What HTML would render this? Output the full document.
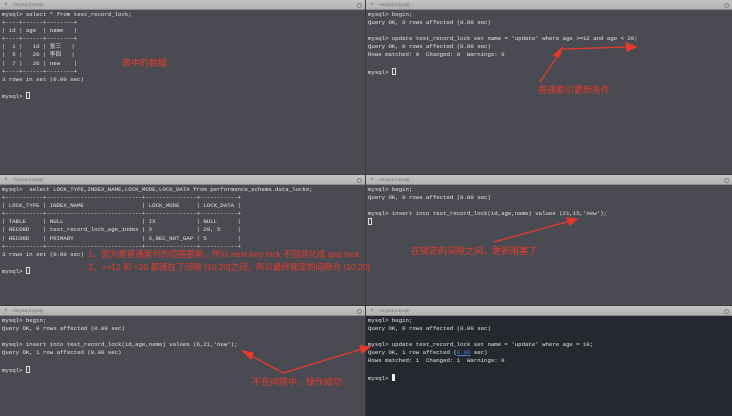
<!DOCTYPE html>
<html><head><meta charset="utf-8"><style>
*{margin:0;padding:0;box-sizing:border-box}
body{width:732px;height:416px;overflow:hidden;background:#3a3b40;position:relative;font-family:"Liberation Mono",monospace}
.p{position:absolute;background:#4a4b52;overflow:hidden}
.t{position:absolute;left:0;right:0;top:0;height:10px;background:linear-gradient(#c4c4c4,#b2b2b2);border-bottom:1px solid #8a8a8a;font-family:"Liberation Sans",sans-serif;font-size:4.5px;color:#707070;line-height:10px}
.t .x{position:absolute;left:4px;font-size:6px}
.t .n{position:absolute;left:12px}
.t .c{position:absolute;right:3px;top:2.5px;width:5px;height:5px;border:1px solid #808080;border-radius:50%}
pre{position:absolute;left:2px;font-family:"Liberation Mono","Noto Sans CJK SC",monospace;font-size:5.7px;line-height:8.1px;color:#e4e4e4;white-space:pre}
.r{position:absolute;color:#e8392a;font-family:"Liberation Sans","Noto Sans CJK SC",sans-serif;font-size:9px;white-space:nowrap;line-height:12px}
.cur{display:inline-block;width:4px;height:7px;border:1px solid #ddd;vertical-align:-1px}
.curf{display:inline-block;width:3px;height:7px;background:#eee;vertical-align:-1px}
</style></head><body>
<div class="p" style="left:0;top:0;width:365px;height:174px">
<div class="t"><span class="x">×</span><span class="n">~/mysql (mysql)</span><span class="c"></span></div>
<pre style="top:11px">mysql> select * from test_record_lock;
+----+------+--------+
| id | age  | name   |
+----+------+--------+
|  1 |   10 | 张三   |
|  5 |   20 | 李四   |
|  7 |   26 | new    |
+----+------+--------+
3 rows in set (0.00 sec)

mysql> <span class="cur"></span></pre>
<div class="r" style="left:122px;top:57px">表中的数据</div>
</div>
<div class="p" style="left:366px;top:0;width:366px;height:174px">
<div class="t"><span class="x">×</span><span class="n">~/mysql (mysql)</span><span class="c"></span></div>
<pre style="top:11px">mysql> begin;
Query OK, 0 rows affected (0.00 sec)

mysql> update test_record_lock set name = 'update' where age >=12 and age &lt; 20;
Query OK, 0 rows affected (0.00 sec)
Rows matched: 0  Changed: 0  Warnings: 0

mysql> <span class="cur"></span></pre>
<div class="r" style="left:172px;top:84px">普通索引更新条件</div>
</div>
<div class="p" style="left:0;top:175px;width:365px;height:130px">
<div class="t"><span class="x">×</span><span class="n">~/mysql (mysql)</span><span class="c"></span></div>
<pre style="top:11px">mysql>  select LOCK_TYPE,INDEX_NAME,LOCK_MODE,LOCK_DATA from performance_schema.data_locks;
+-----------+----------------------------+---------------+-----------+
| LOCK_TYPE | INDEX_NAME                 | LOCK_MODE     | LOCK_DATA |
+-----------+----------------------------+---------------+-----------+
| TABLE     | NULL                       | IX            | NULL      |
| RECORD    | test_record_lock_age_index | X             | 20, 5     |
| RECORD    | PRIMARY                    | X,REC_NOT_GAP | 5         |
+-----------+----------------------------+---------------+-----------+
3 rows in set (0.00 sec)

mysql> <span class="cur"></span></pre>
</div>
<div class="p" style="left:366px;top:175px;width:366px;height:130px">
<div class="t"><span class="x">×</span><span class="n">~/mysql (mysql)</span><span class="c"></span></div>
<pre style="top:11px">mysql> begin;
Query OK, 0 rows affected (0.00 sec)

mysql> insert into test_record_lock(id,age,name) values (21,15,'new');
<span class="cur"></span></pre>
</div>
<div class="p" style="left:0;top:306px;width:365px;height:110px">
<div class="t"><span class="x">×</span><span class="n">~/mysql (mysql)</span><span class="c"></span></div>
<pre style="top:11px">mysql> begin;
Query OK, 0 rows affected (0.00 sec)

mysql> insert into test_record_lock(id,age,name) values (6,21,'new');
Query OK, 1 row affected (0.00 sec)

mysql> <span class="cur"></span></pre>
</div>
<div class="p" style="left:366px;top:306px;width:366px;height:110px;background:#262830">
<div class="t"><span class="x">×</span><span class="n">~/mysql (mysql)</span><span class="c"></span></div>
<pre style="top:11px">mysql> begin;
Query OK, 0 rows affected (0.00 sec)

mysql> update test_record_lock set name = 'update' where age = 10;
Query OK, 1 row affected (<span style="color:#4a7be0;text-decoration:underline">0.00</span> sec)
Rows matched: 1  Changed: 1  Warnings: 0

mysql> <span class="curf"></span></pre>
</div>
<div class="r" style="left:88px;top:248px;font-size:8.5px">1、因为是普通索引的范围更新，所以 next-key lock 不回退化成 gap lock</div>
<div class="r" style="left:88px;top:261px;font-size:8.5px">2、>=12 和 &lt;20 都落在了间隙 (10,20]之间，所以最终锁定的间隙为 (10,20]</div>
<div class="r" style="left:411px;top:245px">在锁定的间隙之间，更新阻塞了</div>
<div class="r" style="left:252px;top:376px">不在间隙中，操作成功</div>
<svg width="732" height="416" style="position:absolute;left:0;top:0" fill="none" stroke="#e8392a" stroke-width="1.3">
<path d="M540 82 L561 51 M563 49 L628 47"/><path d="M636 47 L626 43 L627 51 Z" fill="#e8392a"/><path d="M562 48 L554 55 L559 57 Z" fill="#e8392a"/>
<path d="M494 242 L570 221"/><path d="M577 219 L567 218 L570 225 Z" fill="#e8392a"/>
<path d="M283 373 L248 354 M283 373 L362 349"/><path d="M243 351 L251 359 L253 353 Z" fill="#e8392a"/><path d="M370 347 L360 346 L362 353 Z" fill="#e8392a"/>
</svg>
</body></html>
